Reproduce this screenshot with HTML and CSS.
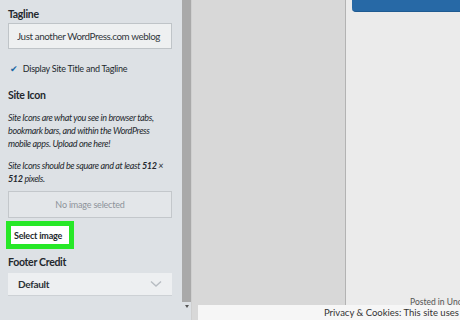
FILE: index.html
```html
<!DOCTYPE html>
<html lang="en">
<head>
    <meta charset="UTF-8">
    <meta name="viewport" content="width=device-width, initial-scale=1.0">
    <title>Customize Site Identity</title>
    <link rel="stylesheet" href="styles.css">
</head>
<body>
    <div class="layout">
        <div class="sidebar">
            <div class="field-label tagline-label">Tagline</div>
            <input class="text-input" type="text" value="Just another WordPress.com weblog">

            <label class="check-row">
                <span class="check-mark">&#10004;</span>
                Display Site Title and Tagline
            </label>

            <div class="field-label icon-label">Site Icon</div>
            <p class="note">Site Icons are what you see in browser tabs, bookmark bars, and within the WordPress mobile apps. Upload one here!</p>
            <p class="note">Site Icons should be square and at least <b>512</b> &times; <b>512</b> pixels.</p>

            <div class="dropzone">No image selected</div>

            <div class="highlight">
                <button class="select-btn">Select image</button>
            </div>

            <div class="field-label footer-label">Footer Credit</div>
            <div class="select-box">
                <span>Default</span>
                <svg width="12" height="8" viewBox="0 0 12 8"><path d="M1 1.5 L6 6 L11 1.5" fill="none" stroke="#b7bcc2" stroke-width="1.4"/></svg>
            </div>
        </div>

        <div class="scrollbar">
            <div class="scroll-track"></div>
            <div class="scroll-arrow"></div>
        </div>

        <div class="gutter"></div>

        <div class="preview">
            <div class="preview-button"></div>
            <div class="posted">Posted in Uncategorized</div>
        </div>
    </div>

    <div class="cookie-bar">Privacy &amp; Cookies: This site uses cookies.</div>
</body>
</html>
```

FILE: styles.css
```css
html, body {
    margin: 0;
    height: 100%;
    overflow: hidden;
}
body {
    font-family: Lato, "Noto Sans", sans-serif;
    color: #23282d;
    position: relative;
}
.layout {
    display: flex;
    height: 320px;
}
.sidebar {
    width: 165px;
    padding: 0 9px 0 8px;
    background-color: #dde1e5;
    flex-shrink: 0;
}
.field-label {
    font-size: 10.5px;
    font-weight: bold;
    letter-spacing: -0.3px;
    line-height: 12px;
}
.tagline-label {
    margin: 8px 0 3px;
}
.icon-label {
    margin-top: 15px;
}
.footer-label {
    margin: 7px 0 5px;
}
.text-input {
    box-sizing: border-box;
    width: 164px;
    height: 26px;
    padding: 0 8px;
    border: 1px solid #bfc4c8;
    background-color: #eef0f1;
    font-family: inherit;
    font-size: 9.8px;
    letter-spacing: -0.4px;
    color: #32373c;
    display: block;
}
.check-row {
    display: flex;
    align-items: center;
    gap: 5px;
    font-size: 9px;
    letter-spacing: -0.25px;
    line-height: 11px;
    margin-top: 14px;
    margin-left: 2px;
}
.check-mark {
    color: #1e6aa5;
    font-size: 9px;
}
.note {
    font-style: italic;
    font-size: 9px;
    letter-spacing: -0.35px;
    line-height: 13px;
    margin: 9.5px 0 0;
}
.note + .note {
    margin-top: 9px;
}
.dropzone {
    box-sizing: border-box;
    width: 164px;
    height: 27px;
    margin-top: 6.5px;
    border: 1px solid #c3c7cb;
    background-color: #e3e6e9;
    color: #8d939a;
    font-size: 9px;
    letter-spacing: -0.2px;
    display: flex;
    align-items: center;
    justify-content: center;
}
.highlight {
    display: inline-block;
    margin: 3px 0 0 -2px;
    padding: 1px;
    border: 4px solid #27e827;
    background-color: #27e827;
}
.select-btn {
    display: block;
    border: none;
    background-color: #ffffff;
    font-family: inherit;
    font-size: 9px;
    font-weight: bold;
    letter-spacing: -0.2px;
    color: #23282d;
    padding: 0 3px;
    width: 58px;
    height: 18px;
    white-space: nowrap;
    text-align: left;
}
.select-box {
    box-sizing: border-box;
    width: 164px;
    height: 23px;
    padding: 0 10px;
    background-color: #edeff1;
    border-bottom: 1px solid #cdd1d5;
    display: flex;
    align-items: center;
    justify-content: space-between;
    font-size: 10px;
    font-weight: bold;
    letter-spacing: -0.3px;
    color: #2c3136;
}
.scrollbar {
    width: 9px;
    display: flex;
    flex-direction: column;
    background-color: #dde1e5;
}
.scroll-track {
    flex: 1;
    background-color: #a9a9a9;
    max-height: 302px;
}
.scroll-arrow {
    height: 8px;
    position: relative;
}
.scroll-arrow::after {
    content: "";
    position: absolute;
    left: 3px;
    top: 3px;
    border-left: 2px solid transparent;
    border-right: 2px solid transparent;
    border-top: 3px solid #555;
}
.gutter {
    width: 153px;
    background-color: #d8d8d8;
    border-left: 1px solid #cfcfcf;
    border-right: 1px solid #b3b3b3;
}
.preview {
    flex: 1;
    background-color: #ebebeb;
    position: relative;
}
.preview-button {
    margin-left: 6px;
    height: 11px;
    background-color: #2769a6;
    border-radius: 0 0 0 4px;
    border-bottom: 1px solid #1f5a91;
}
.posted {
    position: absolute;
    left: 64px;
    top: 297px;
    font-size: 8.5px;
    color: #555;
    white-space: nowrap;
}
.cookie-bar {
    position: absolute;
    left: 198px;
    right: 0;
    bottom: 0;
    height: 15px;
    background-color: #f6f6f6;
    font-size: 9.5px;
    color: #333;
    padding-left: 126px;
    line-height: 16px;
    white-space: nowrap;
    overflow: hidden;
}
```
